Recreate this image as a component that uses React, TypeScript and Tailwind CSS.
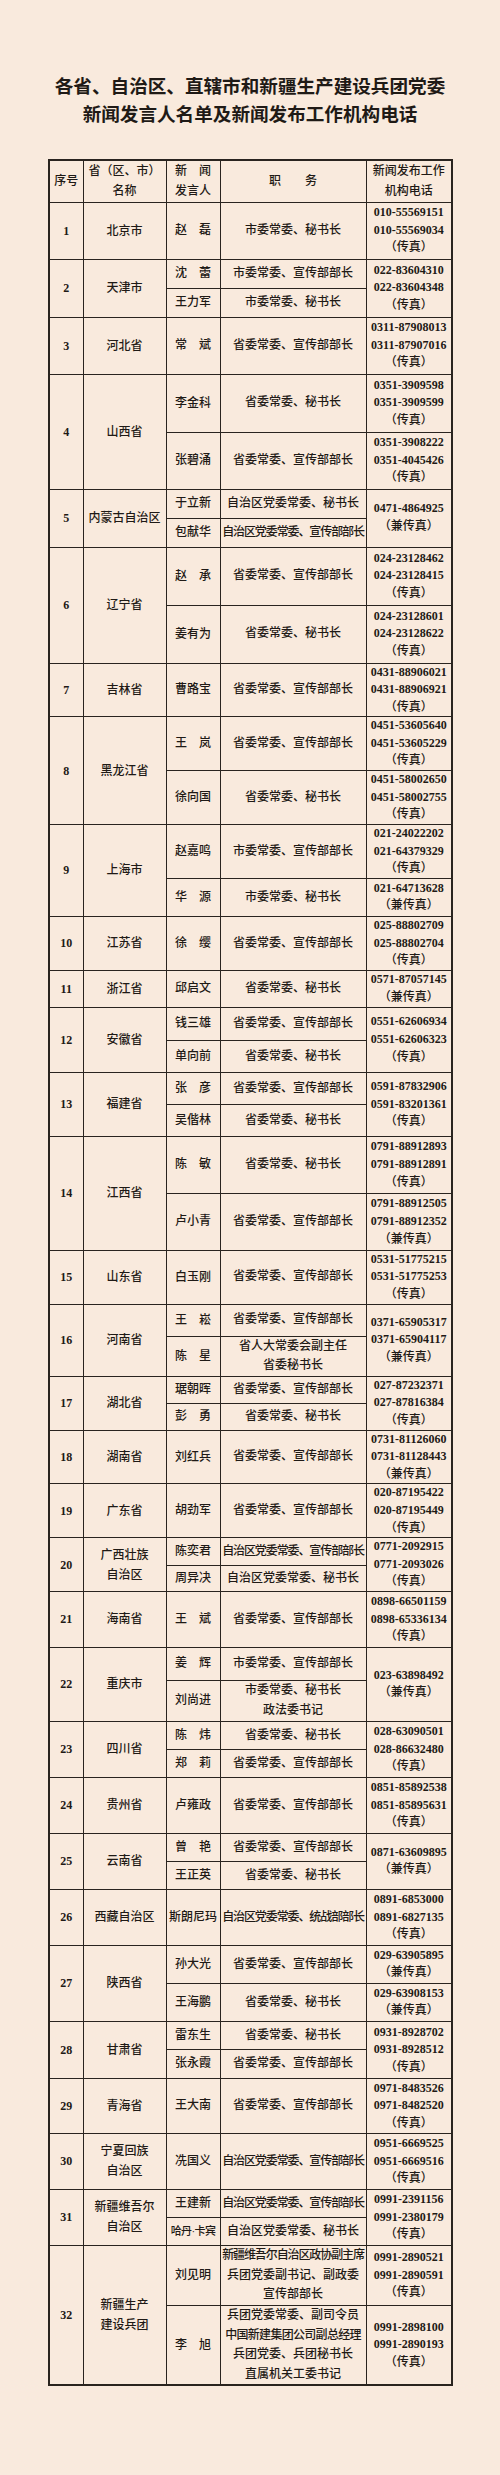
import React from "react";

type Sub = { name: string; pos: string[]; phone?: string[]; h: string; nameCls?: string };
type Row = { no: number; prov: string[]; subs: Sub[]; phone?: string[] };

const F = "（传真）";
const J = "（兼传真）";

const rows: Row[] = [
  { no: 1, prov: ["北京市"], subs: [{ name: "赵　磊", pos: ["市委常委、秘书长"], h: "h-[57px]" }], phone: ["010-55569151", "010-55569034", F] },
  {
    no: 2, prov: ["天津市"],
    subs: [
      { name: "沈　蕾", pos: ["市委常委、宣传部部长"], h: "h-[29px]" },
      { name: "王力军", pos: ["市委常委、秘书长"], h: "h-[29px]" },
    ],
    phone: ["022-83604310", "022-83604348", F],
  },
  { no: 3, prov: ["河北省"], subs: [{ name: "常　斌", pos: ["省委常委、宣传部部长"], h: "h-[57px]" }], phone: ["0311-87908013", "0311-87907016", F] },
  {
    no: 4, prov: ["山西省"],
    subs: [
      { name: "李金科", pos: ["省委常委、秘书长"], phone: ["0351-3909598", "0351-3909599", F], h: "h-[58px]" },
      { name: "张碧涌", pos: ["省委常委、宣传部部长"], phone: ["0351-3908222", "0351-4045426", F], h: "h-[57px]" },
    ],
  },
  {
    no: 5, prov: ["内蒙古自治区"],
    subs: [
      { name: "于立新", pos: ["自治区党委常委、秘书长"], h: "h-[29px]" },
      { name: "包献华", pos: ["自治区党委常委、宣传部部长"], h: "h-[29px]" },
    ],
    phone: ["0471-4864925", J],
  },
  {
    no: 6, prov: ["辽宁省"],
    subs: [
      { name: "赵　承", pos: ["省委常委、宣传部部长"], phone: ["024-23128462", "024-23128415", F], h: "h-[58px]" },
      { name: "姜有为", pos: ["省委常委、秘书长"], phone: ["024-23128601", "024-23128622", F], h: "h-[58px]" },
    ],
  },
  { no: 7, prov: ["吉林省"], subs: [{ name: "曹路宝", pos: ["省委常委、宣传部部长"], h: "h-[53px]" }], phone: ["0431-88906021", "0431-88906921", F] },
  {
    no: 8, prov: ["黑龙江省"],
    subs: [
      { name: "王　岚", pos: ["省委常委、宣传部部长"], phone: ["0451-53605640", "0451-53605229", F], h: "h-[53px]" },
      { name: "徐向国", pos: ["省委常委、秘书长"], phone: ["0451-58002650", "0451-58002755", F], h: "h-[54px]" },
    ],
  },
  {
    no: 9, prov: ["上海市"],
    subs: [
      { name: "赵嘉鸣", pos: ["市委常委、宣传部部长"], phone: ["021-24022202", "021-64379329", F], h: "h-[53px]" },
      { name: "华　源", pos: ["市委常委、秘书长"], phone: ["021-64713628", J], h: "h-[38px]" },
    ],
  },
  { no: 10, prov: ["江苏省"], subs: [{ name: "徐　缨", pos: ["省委常委、宣传部部长"], h: "h-[54px]" }], phone: ["025-88802709", "025-88802704", F] },
  { no: 11, prov: ["浙江省"], subs: [{ name: "邱启文", pos: ["省委常委、秘书长"], h: "h-[37px]" }], phone: ["0571-87057145", J] },
  {
    no: 12, prov: ["安徽省"],
    subs: [
      { name: "钱三雄", pos: ["省委常委、宣传部部长"], h: "h-[33px]" },
      { name: "单向前", pos: ["省委常委、秘书长"], h: "h-[32px]" },
    ],
    phone: ["0551-62606934", "0551-62606323", F],
  },
  {
    no: 13, prov: ["福建省"],
    subs: [
      { name: "张　彦", pos: ["省委常委、宣传部部长"], h: "h-[32px]" },
      { name: "吴偕林", pos: ["省委常委、秘书长"], h: "h-[32px]" },
    ],
    phone: ["0591-87832906", "0591-83201361", F],
  },
  {
    no: 14, prov: ["江西省"],
    subs: [
      { name: "陈　敏", pos: ["省委常委、秘书长"], phone: ["0791-88912893", "0791-88912891", F], h: "h-[57px]" },
      { name: "卢小青", pos: ["省委常委、宣传部部长"], phone: ["0791-88912505", "0791-88912352", J], h: "h-[57px]" },
    ],
  },
  { no: 15, prov: ["山东省"], subs: [{ name: "白玉刚", pos: ["省委常委、宣传部部长"], h: "h-[53px]" }], phone: ["0531-51775215", "0531-51775253", F] },
  {
    no: 16, prov: ["河南省"],
    subs: [
      { name: "王　崧", pos: ["省委常委、宣传部部长"], h: "h-[32px]" },
      { name: "陈　星", pos: ["省人大常委会副主任", "省委秘书长"], h: "h-[39px]" },
    ],
    phone: ["0371-65905317", "0371-65904117", J],
  },
  {
    no: 17, prov: ["湖北省"],
    subs: [
      { name: "琚朝晖", pos: ["省委常委、宣传部部长"], h: "h-[27px]" },
      { name: "彭　勇", pos: ["省委常委、秘书长"], h: "h-[27px]" },
    ],
    phone: ["027-87232371", "027-87816384", F],
  },
  { no: 18, prov: ["湖南省"], subs: [{ name: "刘红兵", pos: ["省委常委、宣传部部长"], h: "h-[53px]" }], phone: ["0731-81126060", "0731-81128443", J] },
  { no: 19, prov: ["广东省"], subs: [{ name: "胡劲军", pos: ["省委常委、宣传部部长"], h: "h-[53px]" }], phone: ["020-87195422", "020-87195449", F] },
  {
    no: 20, prov: ["广西壮族", "自治区"],
    subs: [
      { name: "陈奕君", pos: ["自治区党委常委、宣传部部长"], h: "h-[27px]" },
      { name: "周异决", pos: ["自治区党委常委、秘书长"], h: "h-[26px]" },
    ],
    phone: ["0771-2092915", "0771-2093026", F],
  },
  { no: 21, prov: ["海南省"], subs: [{ name: "王　斌", pos: ["省委常委、宣传部部长"], h: "h-[56px]" }], phone: ["0898-66501159", "0898-65336134", F] },
  {
    no: 22, prov: ["重庆市"],
    subs: [
      { name: "姜　辉", pos: ["市委常委、宣传部部长"], h: "h-[33px]" },
      { name: "刘尚进", pos: ["市委常委、秘书长", "政法委书记"], h: "h-[41px]" },
    ],
    phone: ["023-63898492", J],
  },
  {
    no: 23, prov: ["四川省"],
    subs: [
      { name: "陈　炜", pos: ["省委常委、秘书长"], h: "h-[28px]" },
      { name: "郑　莉", pos: ["省委常委、宣传部部长"], h: "h-[28px]" },
    ],
    phone: ["028-63090501", "028-86632480", F],
  },
  { no: 24, prov: ["贵州省"], subs: [{ name: "卢雍政", pos: ["省委常委、宣传部部长"], h: "h-[56px]" }], phone: ["0851-85892538", "0851-85895631", F] },
  {
    no: 25, prov: ["云南省"],
    subs: [
      { name: "曾　艳", pos: ["省委常委、宣传部部长"], h: "h-[28px]" },
      { name: "王正英", pos: ["省委常委、秘书长"], h: "h-[28px]" },
    ],
    phone: ["0871-63609895", J],
  },
  { no: 26, prov: ["西藏自治区"], subs: [{ name: "斯朗尼玛", pos: ["自治区党委常委、统战部部长"], h: "h-[56px]" }], phone: ["0891-6853000", "0891-6827135", F] },
  {
    no: 27, prov: ["陕西省"],
    subs: [
      { name: "孙大光", pos: ["省委常委、宣传部部长"], phone: ["029-63905895", J], h: "h-[38px]" },
      { name: "王海鹏", pos: ["省委常委、秘书长"], phone: ["029-63908153", J], h: "h-[38px]" },
    ],
  },
  {
    no: 28, prov: ["甘肃省"],
    subs: [
      { name: "雷东生", pos: ["省委常委、秘书长"], h: "h-[28px]" },
      { name: "张永霞", pos: ["省委常委、宣传部部长"], h: "h-[29px]" },
    ],
    phone: ["0931-8928702", "0931-8928512", F],
  },
  { no: 29, prov: ["青海省"], subs: [{ name: "王大南", pos: ["省委常委、宣传部部长"], h: "h-[55px]" }], phone: ["0971-8483526", "0971-8482520", F] },
  { no: 30, prov: ["宁夏回族", "自治区"], subs: [{ name: "冼国义", pos: ["自治区党委常委、宣传部部长"], h: "h-[56px]" }], phone: ["0951-6669525", "0951-6669516", F] },
  {
    no: 31, prov: ["新疆维吾尔", "自治区"],
    subs: [
      { name: "王建新", pos: ["自治区党委常委、宣传部部长"], h: "h-[28px]" },
      { name: "哈丹·卡宾", pos: ["自治区党委常委、秘书长"], h: "h-[28px]", nameCls: "text-[11px] tracking-[-0.6px]" },
    ],
    phone: ["0991-2391156", "0991-2380179", F],
  },
  {
    no: 32, prov: ["新疆生产", "建设兵团"],
    subs: [
      {
        name: "刘见明",
        pos: ["新疆维吾尔自治区政协副主席", "兵团党委副书记、副政委", "宣传部部长"],
        phone: ["0991-2890521", "0991-2890591", F],
        h: "h-[60px]",
      },
      {
        name: "李　旭",
        pos: ["兵团党委常委、副司令员", "中国新建集团公司副总经理", "兵团党委、兵团秘书长", "直属机关工委书记"],
        phone: ["0991-2898100", "0991-2890193", F],
        h: "h-[80px]",
      },
    ],
  },
];

const cell = "border-[1.5px] border-[#2a241f] p-0 text-center align-middle";

function Phone({ lines }: { lines: string[] }) {
  return (
    <div className="flex flex-col items-center">
      {lines.map((l, i) =>
        /^[0-9]/.test(l) ? (
          <div key={i} className="font-bold leading-[17.6px] whitespace-nowrap">
            {l}
          </div>
        ) : (
          <div key={i} className="leading-[17.6px] whitespace-nowrap">
            {l}
          </div>
        )
      )}
    </div>
  );
}

function posCls(t: string) {
  if (t.length >= 13) return "leading-[19.5px] whitespace-nowrap tracking-[-1.1px]";
  if (t.length === 12) return "leading-[19.5px] whitespace-nowrap tracking-[-0.7px]";
  return "leading-[19.5px] whitespace-nowrap";
}

export default function App() {
  return (
    <div className="w-[500px] min-h-[2475px] bg-[#f9eadd] text-[#1f1a16] font-medium font-['Liberation_Serif','Noto_Sans_CJK_SC',serif]">
      <div className="pt-[71px] text-center font-bold text-[18.6px] leading-[28px] font-['Noto_Sans_CJK_SC',sans-serif]">
        <div>各省、自治区、直辖市和新疆生产建设兵团党委</div>
        <div>新闻发言人名单及新闻发布工作机构电话</div>
      </div>
      <table className="mt-[32px] ml-[48px] w-[403px] table-fixed border-collapse border-2 border-[#2a241f] text-[12px]">
        <colgroup>
          <col className="w-[34px]" />
          <col className="w-[83px]" />
          <col className="w-[54px]" />
          <col className="w-[146px]" />
          <col className="w-[86px]" />
        </colgroup>
        <thead>
          <tr className="h-[42px] leading-[20px]">
            <td className={cell}>序号</td>
            <td className={cell}>
              <div className="whitespace-nowrap">省（区、市）</div>
              <div>名称</div>
            </td>
            <td className={cell}>
              <div>新　闻</div>
              <div>发言人</div>
            </td>
            <td className={cell}>职　　务</td>
            <td className={cell}>
              <div className="whitespace-nowrap">新闻发布工作</div>
              <div>机构电话</div>
            </td>
          </tr>
        </thead>
        <tbody>
          {rows.map((r) =>
            r.subs.map((s, i) => (
              <tr key={`${r.no}-${i}`} className={s.h}>
                {i === 0 && (
                  <td rowSpan={r.subs.length} className={`${cell} font-bold`}>
                    {r.no}
                  </td>
                )}
                {i === 0 && (
                  <td rowSpan={r.subs.length} className={cell}>
                    {r.prov.map((p, k) => (
                      <div key={k} className="leading-[20px] whitespace-nowrap">
                        {p}
                      </div>
                    ))}
                  </td>
                )}
                <td className={cell}>
                  <div className={`whitespace-nowrap leading-[19px] ${s.nameCls ?? ""}`}>{s.name}</div>
                </td>
                <td className={cell}>
                  {s.pos.map((p, k) => (
                    <div key={k} className={posCls(p)}>
                      {p}
                    </div>
                  ))}
                </td>
                {s.phone ? (
                  <td className={cell}>
                    <Phone lines={s.phone} />
                  </td>
                ) : i === 0 && r.phone ? (
                  <td rowSpan={r.subs.length} className={cell}>
                    <Phone lines={r.phone} />
                  </td>
                ) : null}
              </tr>
            ))
          )}
        </tbody>
      </table>
    </div>
  );
}
